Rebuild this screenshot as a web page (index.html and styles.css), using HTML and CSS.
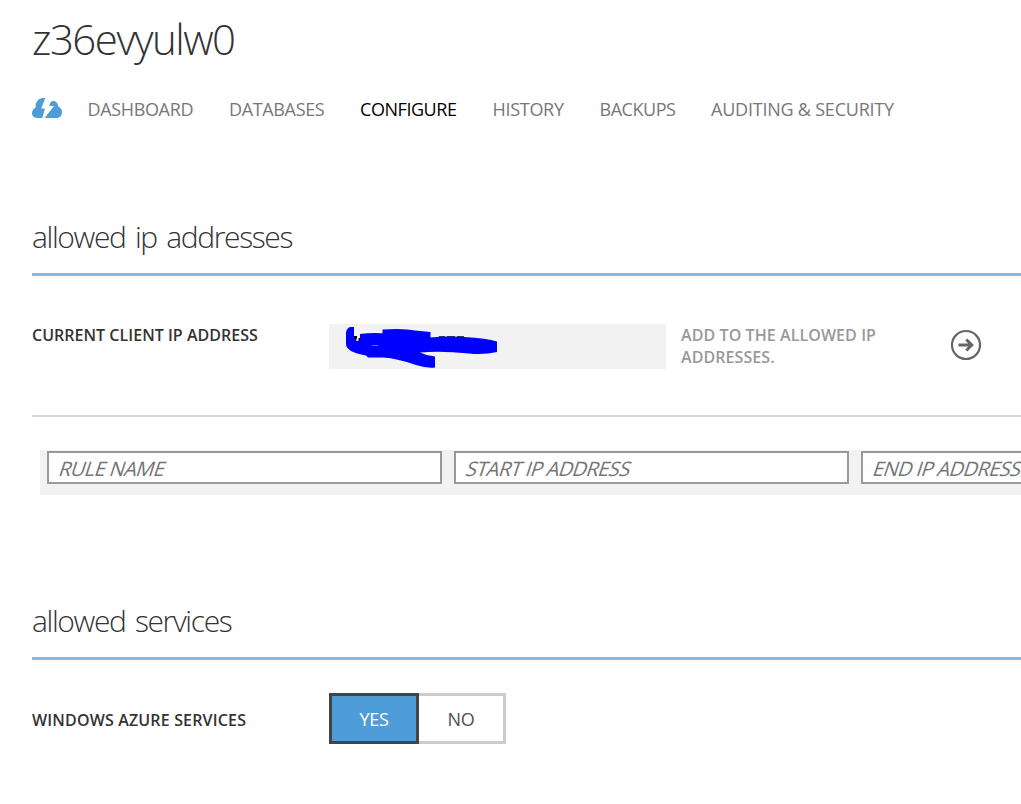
FILE: index.html
```html
<!DOCTYPE html>
<html lang="en">
<head>
<meta charset="utf-8">
<title>z36evyulw0 - Configure</title>
<link rel="stylesheet" href="styles.css">
</head>
<body>
<header>
  <h1 class="title">z36evyulw0</h1>
  <nav class="tabs">
    <svg class="cloud" width="30" height="20" viewBox="0 0 30 20">
      <path fill="#4f9dd8" d="M5 20C2 20 0 18 0 15.300C0 12.500 1.500 10.300 3.600 9.400C3.300 4 6.500 0 11 0H13.300L9.300 10.500H13L10.300 20Z"/>
      <path fill="#4f9dd8" d="M12.600 20L22 8H17.200L18.600 4C22 1.600 25.800 4 26.200 8.600C28.500 9.400 30 11.600 30 14.300C30 17.800 27.800 20 25 20Z"/>
    </svg>
    <a class="tab dashboard">DASHBOARD</a>
    <a class="tab databases">DATABASES</a>
    <a class="tab configure active">CONFIGURE</a>
    <a class="tab history">HISTORY</a>
    <a class="tab backups">BACKUPS</a>
    <a class="tab auditing">AUDITING &amp; SECURITY</a>
  </nav>
</header>

<section class="addresses">
  <h2 class="heading">allowed ip addresses</h2>
  <div class="client">
    <div class="label">CURRENT CLIENT IP ADDRESS</div>
    <div class="ip">
      <svg width="337" height="45" viewBox="0 0 337 45">
        <path fill="#000" d="M24.500 12H28v2l-1.500 3h-1.500v-3.500h-.5zM29.500 14h2v4h-2zM110 12.300h6v2h-6zM118 12.300h8v2h-8zM128 12.300h7v2h-7z"/>
        <path fill="#00f" d="M17 8.500Q18 3 22 3H25V14Q26.500 17 31 17.500V10Q42 8.500 53.500 9.300V5.500Q75 4 86 6.500L101.500 8V13.500Q117 12 135 13Q158 14 168 17.500V28Q155 31 140 29.500Q112 26.500 91 28.500Q98 32 106 32.500V43.500Q98 44.500 87 41Q69 34.500 54 33.500H39L37 31.500Q17 28 17 20Z"/>
        <path stroke="#9ab8ff" stroke-width=".6" d="M43 21.500h6"/>
      </svg>
    </div>
    <div class="add">ADD TO THE ALLOWED IP<br>ADDRESSES.</div>
    <svg class="go" width="32" height="32" viewBox="0 0 32 32" fill="none" stroke="#666">
      <circle cx="16" cy="16" r="14" stroke-width="2.200"/>
      <path stroke-width="3" d="M8.500 16H22M16.300 10.500L21.800 16L16.300 21.500"/>
    </svg>
  </div>
  <div class="rules">
    <div class="field"><span class="hint">RULE NAME</span></div>
    <div class="field"><span class="hint">START IP ADDRESS</span></div>
    <div class="field"><span class="hint">END IP ADDRESS</span></div>
  </div>
</section>

<section class="services">
  <h2 class="heading">allowed services</h2>
  <div class="service">
    <div class="label azure">WINDOWS AZURE SERVICES</div>
    <div class="toggle">
      <div class="yes">YES</div>
      <div class="no">NO</div>
    </div>
  </div>
</section>
</body>
</html>
```
FILE: styles.css
```css
* { box-sizing: border-box; }
body {
  margin: 0;
  padding: 11px 0 0 32px;
  height: 804px;
  overflow: hidden;
  background: #fff;
  color: #333;
  font-family: "Open Sans", "Noto Sans", sans-serif;
}
h1, h2 { margin: 0; font-weight: 300; white-space: nowrap; }
.title { font-size: 42px; line-height: 56px; letter-spacing: -1.5px; color: #333; }
.tabs { display: flex; margin-top: 30px; height: 24px; font-size: 18px; line-height: 24px; color: #777; white-space: nowrap; }
.cloud { flex: none; margin: 1px 25.500px 0 0; }
.tab { flex: none; letter-spacing: -0.35px; }
.dashboard { width: 141.500px; }
.databases { width: 131px; }
.configure { width: 132.500px; letter-spacing: -0.45px; }
.history { width: 107px; letter-spacing: -0.3px; }
.backups { width: 111.500px; letter-spacing: -0.45px; }
.auditing { letter-spacing: -0.22px; }
.active { color: #000; }

.addresses { margin-top: 95px; }
.heading { height: 60px; padding-top: 1px; border-bottom: 3px solid #85b7e2; font-size: 30px; line-height: 40px; letter-spacing: -1.37px; word-spacing: 3px; }
.client { display: flex; height: 141px; padding-top: 48px; border-bottom: 2px solid #d6d6d6; }
.label { flex: none; width: 297px; font-size: 16px; font-weight: 600; line-height: 22px; letter-spacing: 0.03px; white-space: nowrap; }
.azure { letter-spacing: 0.16px; padding-top: 16px; }
.ip { flex: none; width: 337px; height: 45px; background: #f2f2f2; }
.ip svg { display: block; }
.add { flex: none; width: 269px; margin-left: 15px; font-size: 16px; font-weight: 600; line-height: 22px; letter-spacing: 0.08px; color: #98989a; }
.go { flex: none; margin-top: 5px; }
.rules { display: flex; gap: 12px; margin: 33px 0 0 8px; height: 45px; padding: 1px 0 0 7px; background: #f2f2f2; overflow: hidden; }
.field { flex: none; width: 395px; height: 33px; border: 2px solid #999; background: #fff; padding: 1px 0 0 11px; }
.hint { display: inline-block; font-size: 20px; line-height: 29px; letter-spacing: -0.6px; color: #757575; white-space: nowrap; transform: skewX(-18deg); }

.services { margin-top: 105px; }
.service { display: flex; padding-top: 33px; }
.toggle { display: flex; height: 51px; font-size: 18px; line-height: 47px; text-align: center; letter-spacing: -0.3px; }
.yes { width: 90px; border: 3px solid #444; background: #4f9dd8; color: #fff; }
.no { width: 87px; border: 3px solid #ccc; border-left: 0; color: #505050; }
```
